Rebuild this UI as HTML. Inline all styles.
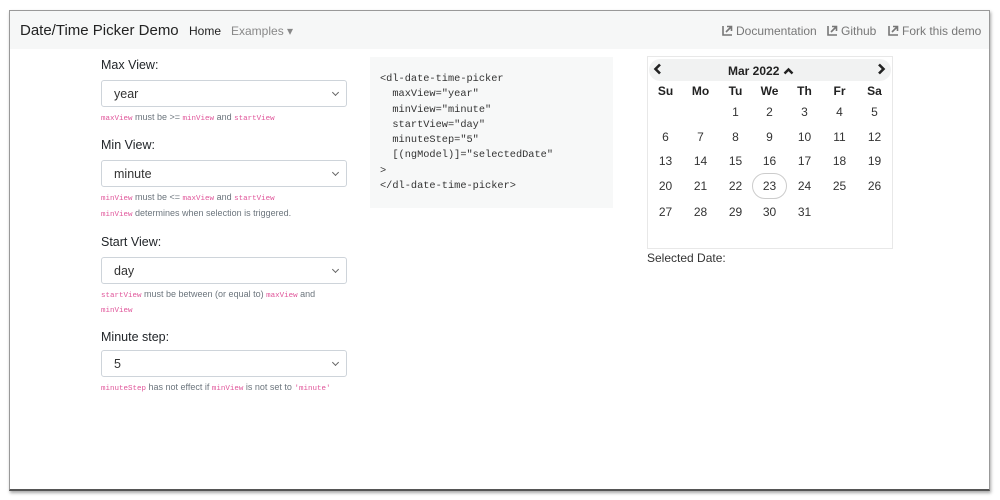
<!DOCTYPE html>
<html><head><meta charset="utf-8"><style>
*{box-sizing:border-box;margin:0;padding:0}
body{width:1000px;height:500px;background:#fff;font-family:"Liberation Sans",sans-serif;color:#212529;position:relative;overflow:hidden}
.frame{position:absolute;left:9px;top:10px;width:981px;height:481px;border:1px solid #999;border-bottom:2px solid #555;box-shadow:1px 2px 3px rgba(0,0,0,.35);background:#fff}
.nav{position:absolute;left:0;top:0;width:979px;height:38px;background:#f6f7f7}
.a{position:absolute;white-space:nowrap}
.brand{font-size:15px;top:11px;left:10px;color:#222}
.navl{font-size:12px;top:13px}
.lbl{font-size:12.5px;left:91px}
.sel{position:absolute;left:91px;width:246px;height:27px;border:1px solid #ced4da;border-radius:3px;font-size:12.5px;padding:6px 12px;color:#333}
.sel:after{content:"";position:absolute;right:8px;top:9px;width:4px;height:4px;border-right:1.3px solid #666;border-bottom:1.3px solid #666;transform:rotate(45deg)}
.help{font-size:9px;left:91px;color:#6c757d}
code{font-family:"Liberation Mono",monospace;color:#e0559a;font-size:7.5px}
.code{position:absolute;left:360px;top:46px;width:243px;height:151px;background:#f7f8f8;font-family:"Liberation Mono",monospace;font-size:10.3px;line-height:15.3px;padding:15px 10px;white-space:pre;color:#333}
.cal{position:absolute;left:637px;top:45px;width:246px;height:193px;border:1px solid #e8e8e8}
.hd{position:absolute;left:1px;top:2px;width:242px;height:22px;background:#f1f2f2;border-radius:11px}
.c{position:absolute;width:35px;text-align:center;font-size:12px;color:#333}
.b{font-weight:bold;color:#222}
.ico{display:inline-block;width:11px;height:11px;vertical-align:-1px;margin-right:3px}
</style></head><body>
<div class="frame">
<div class="nav">
<div class="a brand">Date/Time Picker Demo</div>
<div class="a navl" style="left:179px;color:#222">Home</div>
<div class="a navl" style="left:221px;color:#888">Examples ▾</div>
<div class="a navl" style="left:712px;color:#777"><svg class="ico" viewBox="0 0 11 11"><path d="M1 1v9h9" fill="none" stroke="#777" stroke-width="1.6"/><path d="M4 7l5-5M5 1.5h4.5V6" fill="none" stroke="#777" stroke-width="1.6"/></svg>Documentation</div>
<div class="a navl" style="left:817px;color:#777"><svg class="ico" viewBox="0 0 11 11"><path d="M1 1v9h9" fill="none" stroke="#777" stroke-width="1.6"/><path d="M4 7l5-5M5 1.5h4.5V6" fill="none" stroke="#777" stroke-width="1.6"/></svg>Github</div>
<div class="a navl" style="left:878px;color:#777"><svg class="ico" viewBox="0 0 11 11"><path d="M1 1v9h9" fill="none" stroke="#777" stroke-width="1.6"/><path d="M4 7l5-5M5 1.5h4.5V6" fill="none" stroke="#777" stroke-width="1.6"/></svg>Fork this demo</div>
</div>
<div class="a lbl" style="top:47px">Max View:</div>
<div class="sel" style="top:69px">year</div>
<div class="a help" style="top:101px"><code>maxView</code> must be &gt;= <code>minView</code> and <code>startView</code></div>
<div class="a lbl" style="top:127px">Min View:</div>
<div class="sel" style="top:149px">minute</div>
<div class="a help" style="top:181px"><code>minView</code> must be &lt;= <code>maxView</code> and <code>startView</code></div>
<div class="a help" style="top:197px"><code>minView</code> determines when selection is triggered.</div>
<div class="a lbl" style="top:224px">Start View:</div>
<div class="sel" style="top:246px">day</div>
<div class="a help" style="top:278px"><code>startView</code> must be between (or equal to) <code>maxView</code> and</div>
<div class="a help" style="top:293px"><code>minView</code></div>
<div class="a lbl" style="top:319px">Minute step:</div>
<div class="sel" style="top:339px">5</div>
<div class="a help" style="top:371px"><code>minuteStep</code> has not effect if <code>minView</code> is not set to <code>'minute'</code></div>
<div class="code">&lt;dl-date-time-picker
  maxView="year"
  minView="minute"
  startView="day"
  minuteStep="5"
  [(ngModel)]="selectedDate"
&gt;
&lt;/dl-date-time-picker&gt;</div>
<div class="cal">
<div class="hd"></div>
<svg style="position:absolute;left:5px;top:6px" width="10" height="12" viewBox="0 0 10 12"><path d="M7 1.5L2.5 6 7 10.5" fill="none" stroke="#222" stroke-width="2.6"/></svg>
<svg style="position:absolute;left:228px;top:6px" width="10" height="12" viewBox="0 0 10 12"><path d="M3 1.5L7.5 6 3 10.5" fill="none" stroke="#222" stroke-width="2.6"/></svg>
<div class="c b" style="left:80px;top:7px;width:70px;font-size:12px;text-align:left">Mar 2022 <svg width="11" height="8" viewBox="0 0 11 8"><path d="M1.5 6.5L5.5 2.5 9.5 6.5" fill="none" stroke="#222" stroke-width="2.4"/></svg></div>
</div>
<div id="g"></div>
<div class="a" style="left:637px;top:240px;font-size:12px;color:#333">Selected Date:</div>
</div>
<script>
var g=document.getElementById('g'),h='';
var xs=[638,673,708,742,777,812,847];
var d=['Su','Mo','Tu','We','Th','Fr','Sa'];
for(var i=0;i<7;i++)h+='<div class="c b" style="left:'+xs[i]+'px;top:73px">'+d[i]+'</div>';
var ys=[94,119,143,168,194];var n=1;
for(var r=0;r<5;r++)for(var c=0;c<7;c++){if(r==0&&c<2)continue;if(n>31)break;
h+='<div class="c" style="left:'+xs[c]+'px;top:'+ys[r]+'px">'+n+'</div>';n++;}
h+='<div style="position:absolute;left:742px;top:162px;width:35px;height:26px;border:1px solid #ccc;border-radius:13px"></div>';
g.innerHTML=h;
</script>
</body></html>
